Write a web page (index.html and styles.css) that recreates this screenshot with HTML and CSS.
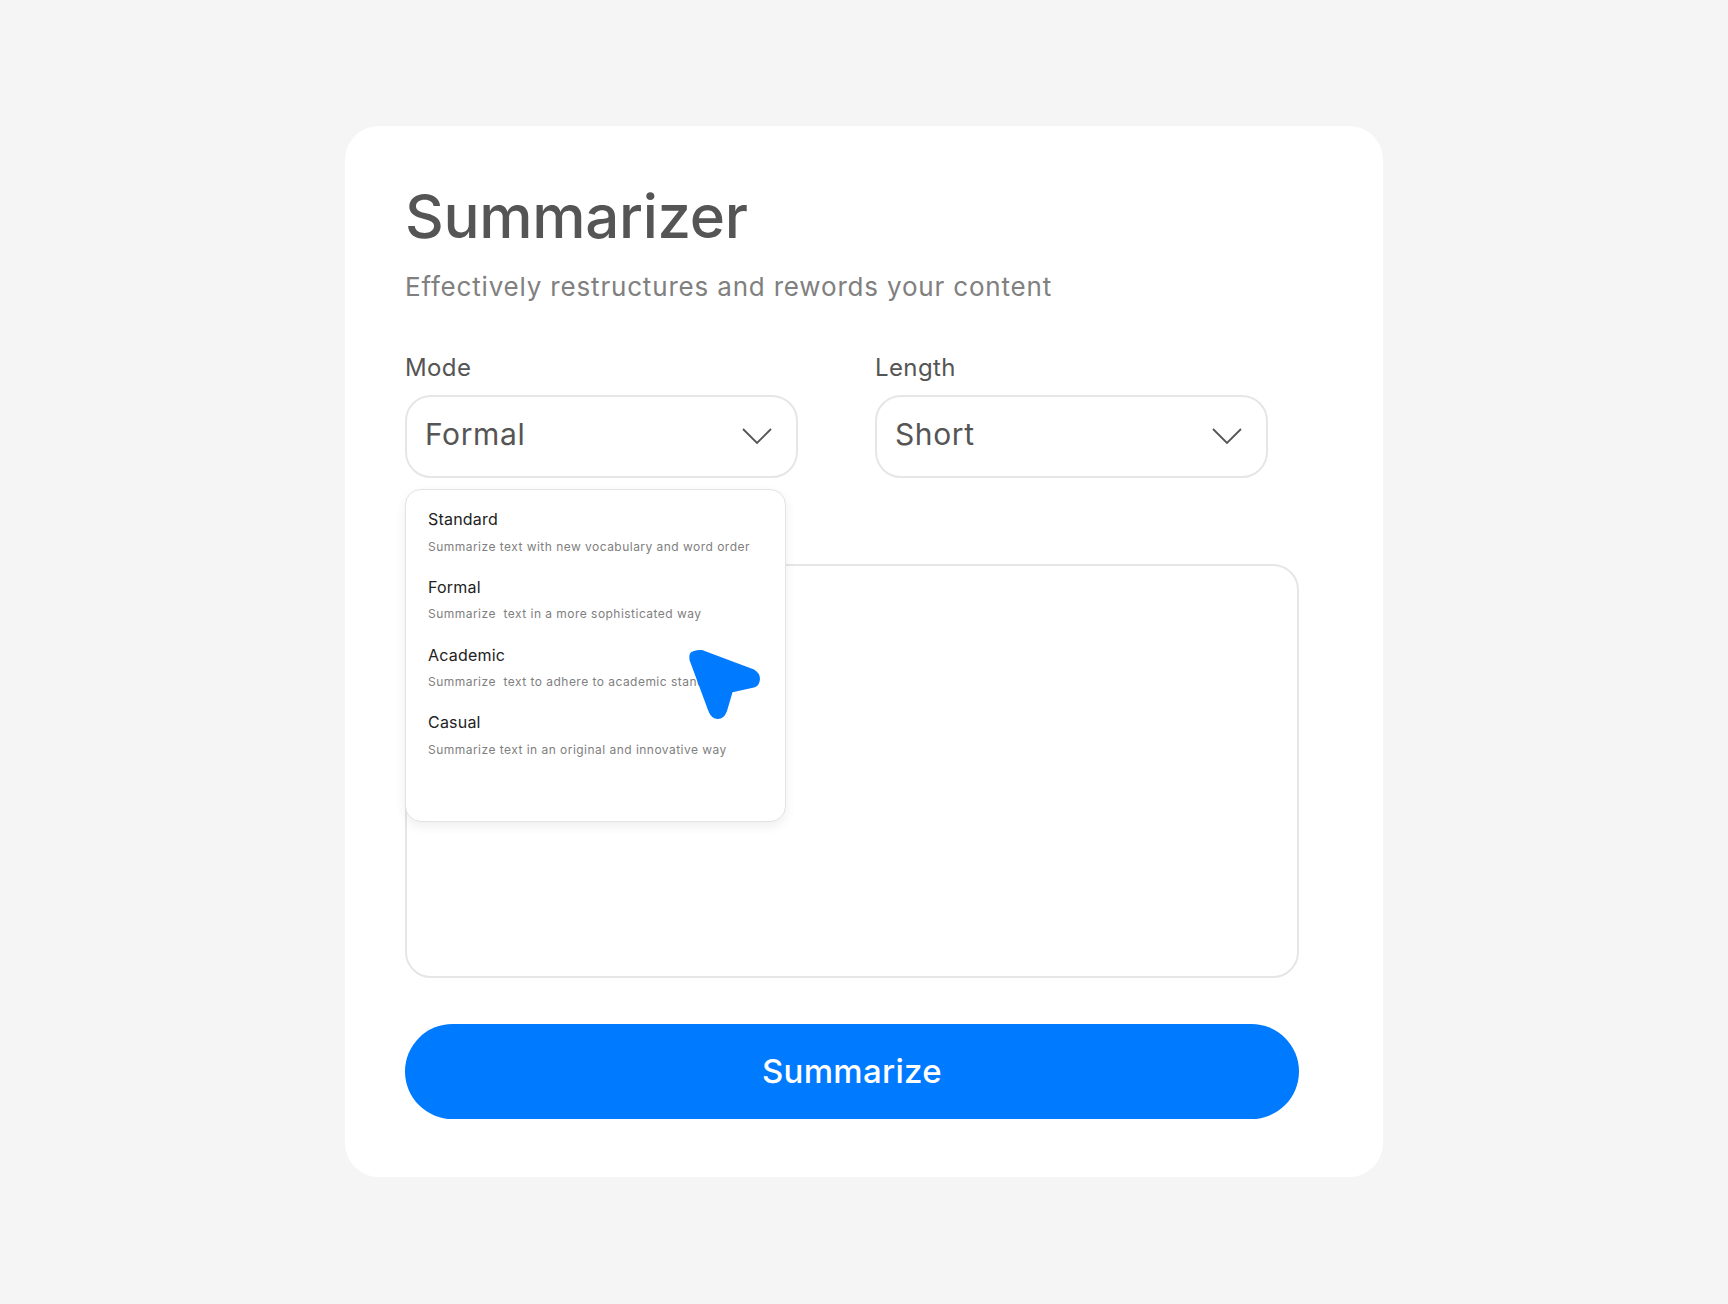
FILE: index.html
```html
<!DOCTYPE html>
<html lang="en">
<head>
<meta charset="utf-8">
<title>Summarizer</title>
<link rel="stylesheet" href="styles.css">
</head>
<body>
<main class="card">
  <h1 class="title">Summarizer</h1>
  <p class="subtitle">Effectively restructures and rewords your content</p>
  <div class="fields">
    <div class="field">
      <div class="label">Mode</div>
      <div class="select">
        <span>Formal</span>
        <svg class="chevron" viewBox="0 0 32 18" aria-hidden="true"><path d="M2 2 L16 16 L30 2"/></svg>
      </div>
      <ul class="menu">
        <li class="option"><div class="option-name">Standard</div><div class="option-desc">Summarize text with new vocabulary and word order</div></li>
        <li class="option"><div class="option-name">Formal</div><div class="option-desc">Summarize&nbsp; text in a more sophisticated way</div></li>
        <li class="option"><div class="option-name">Academic</div><div class="option-desc">Summarize&nbsp; text to adhere to academic standards</div></li>
        <li class="option"><div class="option-name">Casual</div><div class="option-desc">Summarize text in an original and innovative way</div></li>
      </ul>
      <svg class="cursor" viewBox="18 19 72 71" aria-hidden="true"><path d="M32 20 L84 39.5 Q90 43 90 49 Q89.5 56 84 57.5 L62.5 62.3 L57 81 Q54 89 48 89 Q41 89 38 80 L19.5 30 Q18 22 24 21 Q28 19.5 32 20 Z"/></svg>
    </div>
    <div class="field">
      <div class="label">Length</div>
      <div class="select">
        <span>Short</span>
        <svg class="chevron" viewBox="0 0 32 18" aria-hidden="true"><path d="M2 2 L16 16 L30 2"/></svg>
      </div>
    </div>
  </div>
  <div class="textarea"></div>
  <button class="submit" type="button">Summarize</button>
</main>
</body>
</html>
```

FILE: styles.css
```css
* { box-sizing: border-box; }
html, body { height: 100%; }
body {
  margin: 0;
  background: #f5f5f5;
  font-family: Inter, "Liberation Sans", sans-serif;
  display: flex;
  justify-content: center;
  padding-top: 126px;
}
.card {
  width: 1038px;
  height: 1051px;
  background: #fff;
  border-radius: 34px;
  padding: 52px 84px 58px 60px;
  display: flex;
  flex-direction: column;
}
.title {
  margin: 0;
  font-size: 60px;
  line-height: 76px;
  letter-spacing: -0.3px;
  font-weight: 500;
  color: #555;
}
.subtitle {
  margin: 17px 0 0;
  font-size: 26px;
  line-height: 32px;
  letter-spacing: 0.82px;
  color: #808080;
}
.fields {
  display: flex;
  gap: 77px;
  margin-top: 50px;
}
.field { position: relative; width: 393px; }
.label {
  font-size: 24px;
  line-height: 30px;
  letter-spacing: 0.4px;
  color: #555;
  margin-bottom: 12px;
}
.select {
  height: 83px;
  border: 2px solid #e6e6e6;
  border-radius: 26px;
  padding: 0 23px 6px 18px;
  display: flex;
  align-items: center;
  justify-content: space-between;
  font-size: 30px;
  letter-spacing: 0.6px;
  color: #555;
  background: #fff;
}
.chevron { width: 32px; height: 18px; margin-top: 4px; }
.chevron path { fill: none; stroke: #555; stroke-width: 1.8; }
.menu {
  position: absolute;
  left: 0;
  top: 136px;
  z-index: 2;
  width: 381px;
  height: 333px;
  margin: 0;
  padding: 14px 22px 0;
  list-style: none;
  background: #fff;
  border: 1px solid #e3e3e3;
  border-radius: 16px;
  box-shadow: 0 4px 12px rgba(0, 0, 0, 0.07);
}
.option { height: 67.8px; }
.option-name {
  font-size: 16px;
  line-height: 30px;
  letter-spacing: 0.2px;
  color: #222;
}
.option-desc {
  margin-top: 1.5px;
  font-size: 12px;
  line-height: 22px;
  letter-spacing: 0.47px;
  color: #808080;
  white-space: nowrap;
}
.cursor {
  position: absolute;
  left: 283px;
  top: 296px;
  z-index: 3;
  width: 72px;
  height: 71px;
}
.cursor path { fill: #007aff; }
.textarea {
  margin-top: 86px;
  width: 894px;
  height: 414px;
  flex: none;
  border: 2px solid #e6e6e6;
  border-radius: 26px;
}
.submit {
  margin-top: 46px;
  width: 894px;
  height: 95px;
  flex: none;
  border: 0;
  padding: 0 0 2px;
  border-radius: 48px;
  background: #007aff;
  color: #fff;
  font-family: inherit;
  font-size: 33px;
  font-weight: 500;
  letter-spacing: 0.3px;
}
```
